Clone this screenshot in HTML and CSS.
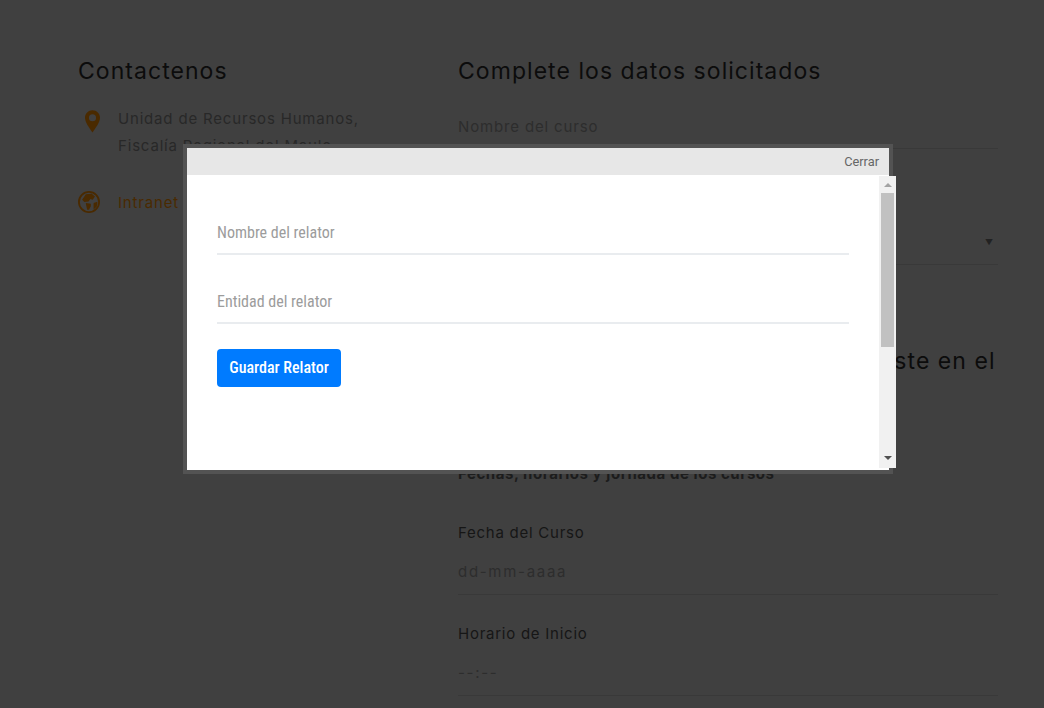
FILE: index.html
```html
<!DOCTYPE html>
<html lang="es">
<head>
<meta charset="utf-8">
<title>Contactenos</title>
<link rel="stylesheet" href="styles.css">
</head>
<body>
<main class="page">
  <aside class="contact">
    <h2 class="title">Contactenos</h2>
    <div class="contact-row">
      <svg class="pin" viewBox="0 0 16 24"><path fill-rule="evenodd" d="M8 0C3.600 0 0 3.500 0 7.900c0 4.900 5.200 11.500 8 15.900 2.800-4.400 8-11 8-15.900C16 3.500 12.400 0 8 0zm0 4.200a3.800 3.800 0 1 1 0 7.600 3.800 3.800 0 0 1 0-7.600z"/></svg>
      <p class="contact-text">Unidad de Recursos Humanos,<br>Fiscalía Regional del Maule</p>
    </div>
    <div class="contact-row contact-link">
      <svg class="globe" viewBox="0 0 24 24"><path fill-rule="evenodd" d="M12 0a12 12 0 1 0 0 24 12 12 0 0 0 0-24zm0 2a10 10 0 1 1 0 20 10 10 0 0 1 0-20zM8.500 3.500l6.500-.5 3.500 3-2.500 3.500-2.500-.8-2 2.800-4.500.5-2.500-2.500zM8.500 13l5.500 1v2.500l-2 4h-2l-1-4.500zM17 13l4.200-1.200-.7 5.200-3.500 3.200z"/></svg>
      <a class="contact-text link">Intranet Fiscalía</a>
    </div>
  </aside>
  <section class="form-area">
    <h2 class="title">Complete los datos solicitados</h2>
    <div class="field first"><span class="placeholder">Nombre del curso</span></div>
    <div class="field select"><span class="placeholder">Relator</span><span class="caret">▼</span></div>
    <h2 class="title second wrapless">Si el relator no existe ingreselo si existe en el</h2>
    <h2 class="title">listado seleccionelo</h2>
    <h3 class="subhead">Fechas, horarios y jornada de los cursos</h3>
    <label class="label">Fecha del Curso</label>
    <div class="field date"><span class="placeholder">dd-mm-aaaa</span></div>
    <label class="label">Horario de Inicio</label>
    <div class="field date"><span class="placeholder">--:--</span></div>
  </section>
</main>

<div class="modal">
  <div class="modal-head"><span class="close">Cerrar</span></div>
  <div class="modal-frame">
    <div class="frame-body">
      <div class="input">Nombre del relator</div>
      <div class="input">Entidad del relator</div>
      <button class="save" type="button">Guardar Relator</button>
    </div>
    <div class="scrollbar">
      <span class="arrow up"></span>
      <span class="thumb"></span>
      <span class="arrow down"></span>
    </div>
  </div>
</div>
</body>
</html>
```
FILE: styles.css
```css
* { box-sizing: border-box; }
html, body { margin: 0; height: 708px; overflow: hidden; }
body {
  background: #404040;
  font-family: "Inter", "Liberation Sans", sans-serif;
  position: relative;
}
.page {
  display: flex;
  padding: 53px 46px 0 78px;
  height: 708px;
  overflow: hidden;
}
.contact { width: 380px; flex: none; }
.form-area { flex: 1; min-width: 0; }
.title {
  margin: 0;
  font-size: 23px;
  line-height: 36px;
  font-weight: 400;
  letter-spacing: 1.05px;
  color: #0c0c0c;
}
.wrapless { white-space: nowrap; }
.contact-row { display: flex; margin-top: 16px; }
.contact-link { margin-top: 32px; }
.pin { width: 15px; height: 23px; margin: 5px 18px 0 7px; fill: #4a2a00; flex: none; }
.globe { width: 22px; height: 22px; margin: 0 18px 0 0; fill: #4a2a00; flex: none; }
.contact-text {
  margin: 0;
  font-size: 15px;
  line-height: 27px;
  letter-spacing: .82px;
  color: #282828;
}
.link { color: #4a2a00; line-height: 23px; }
.field {
  display: flex;
  justify-content: space-between;
  align-items: center;
  height: 52px;
  border-bottom: 1px solid #393939;
  font-size: 15px;
  letter-spacing: .85px;
}
.field.first { margin-top: 15px; height: 45px; }
.field.select {
  margin-top: 37px;
  height: 79px;
  align-items: flex-end;
  padding-bottom: 17px;
}
.placeholder { color: #2d2d2d; }
.caret { font-size: 8px; color: #222; margin-right: 4px; }
.second { margin-top: 78px; }
.subhead {
  margin: 49px 0 0;
  font-size: 15px;
  line-height: 20px;
  font-weight: 700;
  color: #1c1c1c;
  letter-spacing: .55px;
}
.label {
  display: block;
  margin-top: 39px;
  font-size: 15px;
  line-height: 20px;
  letter-spacing: .75px;
  color: #161616;
}
.field.date { padding-top: 6px; letter-spacing: 1.7px; }
.field.date + .label { margin-top: 29px; }
.modal {
  position: absolute;
  left: 183px;
  top: 144px;
  width: 710px;
  height: 330px;
  border: 4px solid #535353;
  background: #fff;
}
.modal-head {
  display: flex;
  justify-content: flex-end;
  align-items: center;
  height: 27px;
  padding-right: 10px;
  background: #e7e7e7;
}
.close {
  font-family: "Roboto", sans-serif;
  font-size: 12.800px;
  font-stretch: 90%;
  color: #666;
}
.modal-frame {
  position: absolute;
  left: 0;
  top: 28px;
  width: 709px;
  height: 292px;
  display: flex;
  background: #fff;
}
.frame-body { flex: 1; padding: 34px 30px 0; }
.input {
  width: 632px;
  height: 45px;
  margin-bottom: 24px;
  padding-top: 13px;
  border-bottom: 2px solid #e9ecef;
  font-family: "Roboto", sans-serif;
  font-stretch: condensed;
  font-size: 16px;
  line-height: 20px;
  color: #9c9c9c;
}
.save {
  display: block;
  width: 124px;
  height: 38px;
  margin-top: 25px;
  padding: 0 0 2px;
  border: 0;
  border-radius: 4px;
  background: #007bff;
  color: #fff;
  font-family: "Roboto", sans-serif;
  font-stretch: condensed;
  font-size: 16px;
  font-weight: 500;
}
.scrollbar {
  position: relative;
  flex: none;
  width: 17px;
  background: #f1f1f1;
  display: flex;
  flex-direction: column;
  align-items: center;
}
.thumb { width: 13px; height: 154px; background: #c1c1c1; }
.arrow { width: 0; height: 0; border-left: 4px solid transparent; border-right: 4px solid transparent; }
.arrow.up { border-bottom: 4px solid #a3a3a3; margin: 7px 0 6px; }
.arrow.down { position: absolute; bottom: 8px; border-top: 4px solid #505050; }
```
